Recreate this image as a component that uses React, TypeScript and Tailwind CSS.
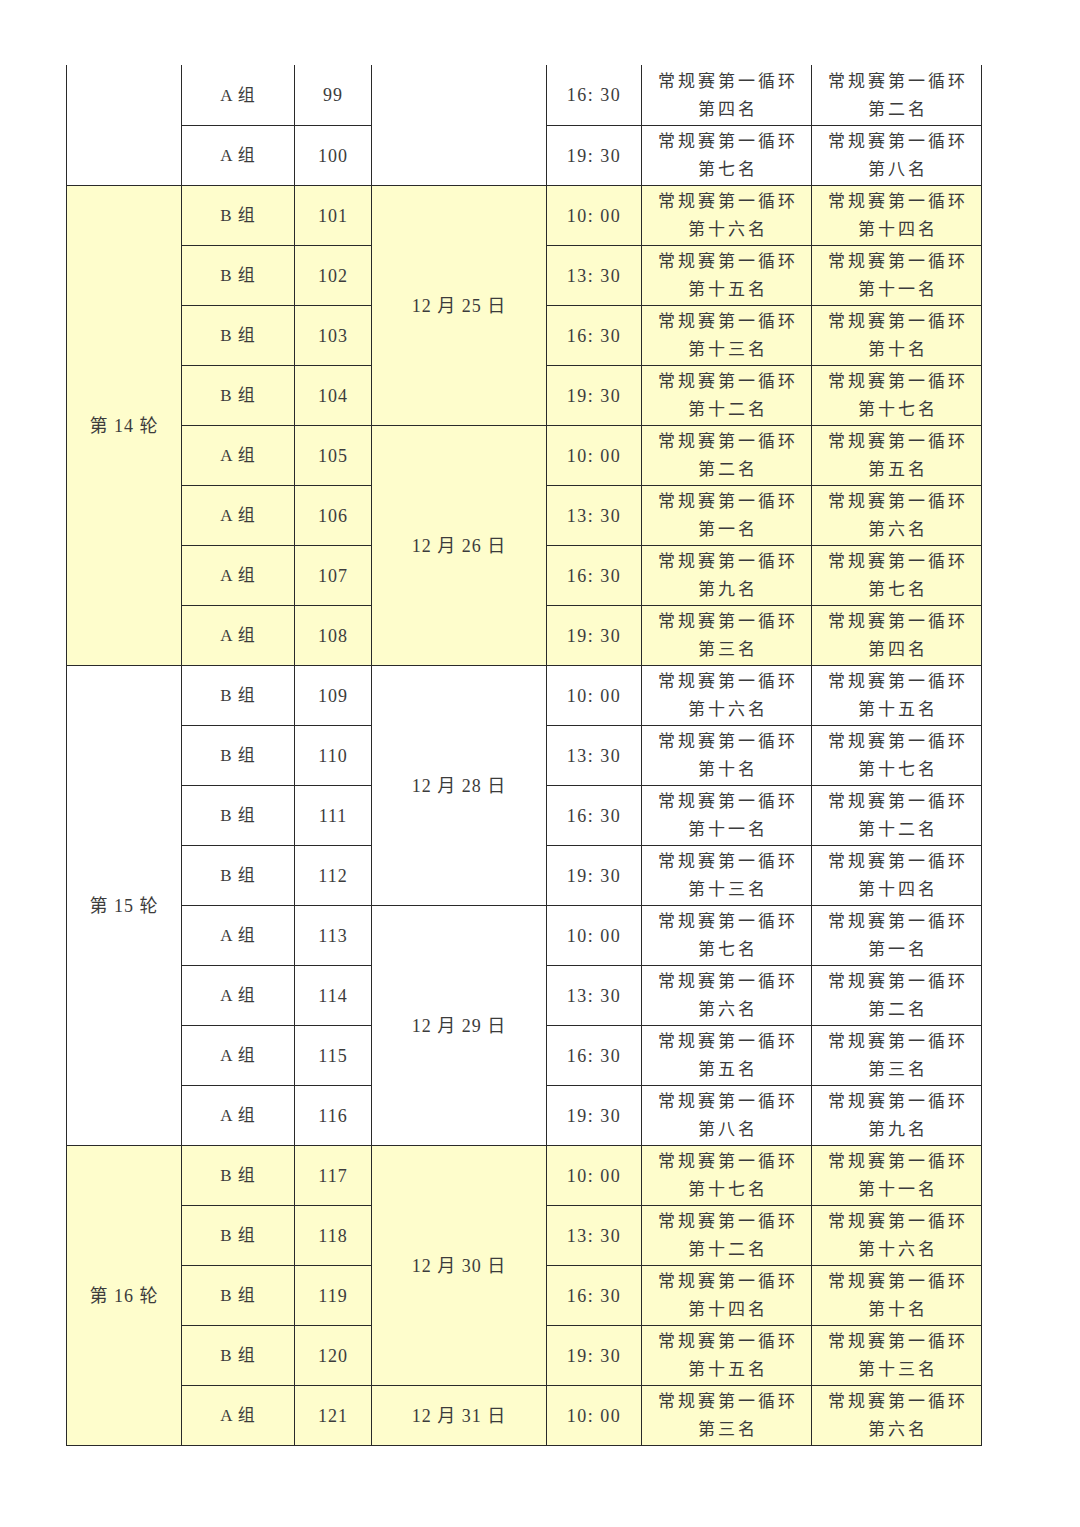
import React from 'react';

type Row = { id: number; group: string; time: string; home: string; away: string };

const rows: Row[] = [
    { id: 99, group: 'A', time: '16: 30', home: '第四名', away: '第二名' },
    { id: 100, group: 'A', time: '19: 30', home: '第七名', away: '第八名' },
    { id: 101, group: 'B', time: '10: 00', home: '第十六名', away: '第十四名' },
    { id: 102, group: 'B', time: '13: 30', home: '第十五名', away: '第十一名' },
    { id: 103, group: 'B', time: '16: 30', home: '第十三名', away: '第十名' },
    { id: 104, group: 'B', time: '19: 30', home: '第十二名', away: '第十七名' },
    { id: 105, group: 'A', time: '10: 00', home: '第二名', away: '第五名' },
    { id: 106, group: 'A', time: '13: 30', home: '第一名', away: '第六名' },
    { id: 107, group: 'A', time: '16: 30', home: '第九名', away: '第七名' },
    { id: 108, group: 'A', time: '19: 30', home: '第三名', away: '第四名' },
    { id: 109, group: 'B', time: '10: 00', home: '第十六名', away: '第十五名' },
    { id: 110, group: 'B', time: '13: 30', home: '第十名', away: '第十七名' },
    { id: 111, group: 'B', time: '16: 30', home: '第十一名', away: '第十二名' },
    { id: 112, group: 'B', time: '19: 30', home: '第十三名', away: '第十四名' },
    { id: 113, group: 'A', time: '10: 00', home: '第七名', away: '第一名' },
    { id: 114, group: 'A', time: '13: 30', home: '第六名', away: '第二名' },
    { id: 115, group: 'A', time: '16: 30', home: '第五名', away: '第三名' },
    { id: 116, group: 'A', time: '19: 30', home: '第八名', away: '第九名' },
    { id: 117, group: 'B', time: '10: 00', home: '第十七名', away: '第十一名' },
    { id: 118, group: 'B', time: '13: 30', home: '第十二名', away: '第十六名' },
    { id: 119, group: 'B', time: '16: 30', home: '第十四名', away: '第十名' },
    { id: 120, group: 'B', time: '19: 30', home: '第十五名', away: '第十三名' },
    { id: 121, group: 'A', time: '10: 00', home: '第三名', away: '第六名' },
];

// round label cells: start id -> [label, rowspan]
const rounds: Record<number, [string, number]> = {
    99: ['', 2],
    101: ['第 14 轮', 8],
    109: ['第 15 轮', 8],
    117: ['第 16 轮', 5],
};

const dates: Record<number, [string, number]> = {
    99: ['', 2],
    101: ['12 月 25 日', 4],
    105: ['12 月 26 日', 4],
    109: ['12 月 28 日', 4],
    113: ['12 月 29 日', 4],
    117: ['12 月 30 日', 4],
    121: ['12 月 31 日', 1],
};

const yellow = (id: number) => (id >= 101 && id <= 108) || id >= 117;

const cell = 'border border-[#2a2a2a] text-center align-middle p-0 pt-[2px]';

const Team = ({ name }: { name: string }) => (
    <div className="leading-[28px] text-[17px] tracking-[3px] pl-[3px]">
        <div>常规赛第一循环</div>
        <div>{name}</div>
    </div>
);

export default function App() {
    return (
        <div
            className="w-[1080px] h-[1527px] bg-white pt-[65px] pl-[66px] text-[#3c3c3c]"
            style={{ fontFamily: '"Liberation Serif", "Noto Sans CJK SC", serif' }}
        >
            <table className="border-collapse table-fixed w-[915px]">
                <colgroup>
                    <col className="w-[115px]" />
                    <col className="w-[113px]" />
                    <col className="w-[77px]" />
                    <col className="w-[175px]" />
                    <col className="w-[95px]" />
                    <col className="w-[170px]" />
                    <col className="w-[170px]" />
                </colgroup>
                <tbody>
                    {rows.map((r, i) => {
                        const bg = yellow(r.id) ? 'bg-[#fefdcc]' : 'bg-white';
                        const top = i === 0 ? 'border-t-0' : '';
                        const round = rounds[r.id];
                        const date = dates[r.id];
                        return (
                            <tr key={r.id} className="h-[60px]">
                                {round && (
                                    <td rowSpan={round[1]} className={`${cell} ${top} ${bg} text-[18px] tracking-[1px]`}>
                                        {round[0]}
                                    </td>
                                )}
                                <td className={`${cell} ${top} ${bg} text-[17px] tracking-[1px]`}>{r.group} 组</td>
                                <td className={`${cell} ${top} ${bg} text-[18px] tracking-[1px]`}>{r.id}</td>
                                {date && (
                                    <td rowSpan={date[1]} className={`${cell} ${top} ${bg} text-[18px] tracking-[1px]`}>
                                        {date[0]}
                                    </td>
                                )}
                                <td className={`${cell} ${top} ${bg} text-[18px] tracking-[1.5px]`}>{r.time}</td>
                                <td className={`${cell} ${top} ${bg}`}>
                                    <Team name={r.home} />
                                </td>
                                <td className={`${cell} ${top} ${bg}`}>
                                    <Team name={r.away} />
                                </td>
                            </tr>
                        );
                    })}
                </tbody>
            </table>
        </div>
    );
}
